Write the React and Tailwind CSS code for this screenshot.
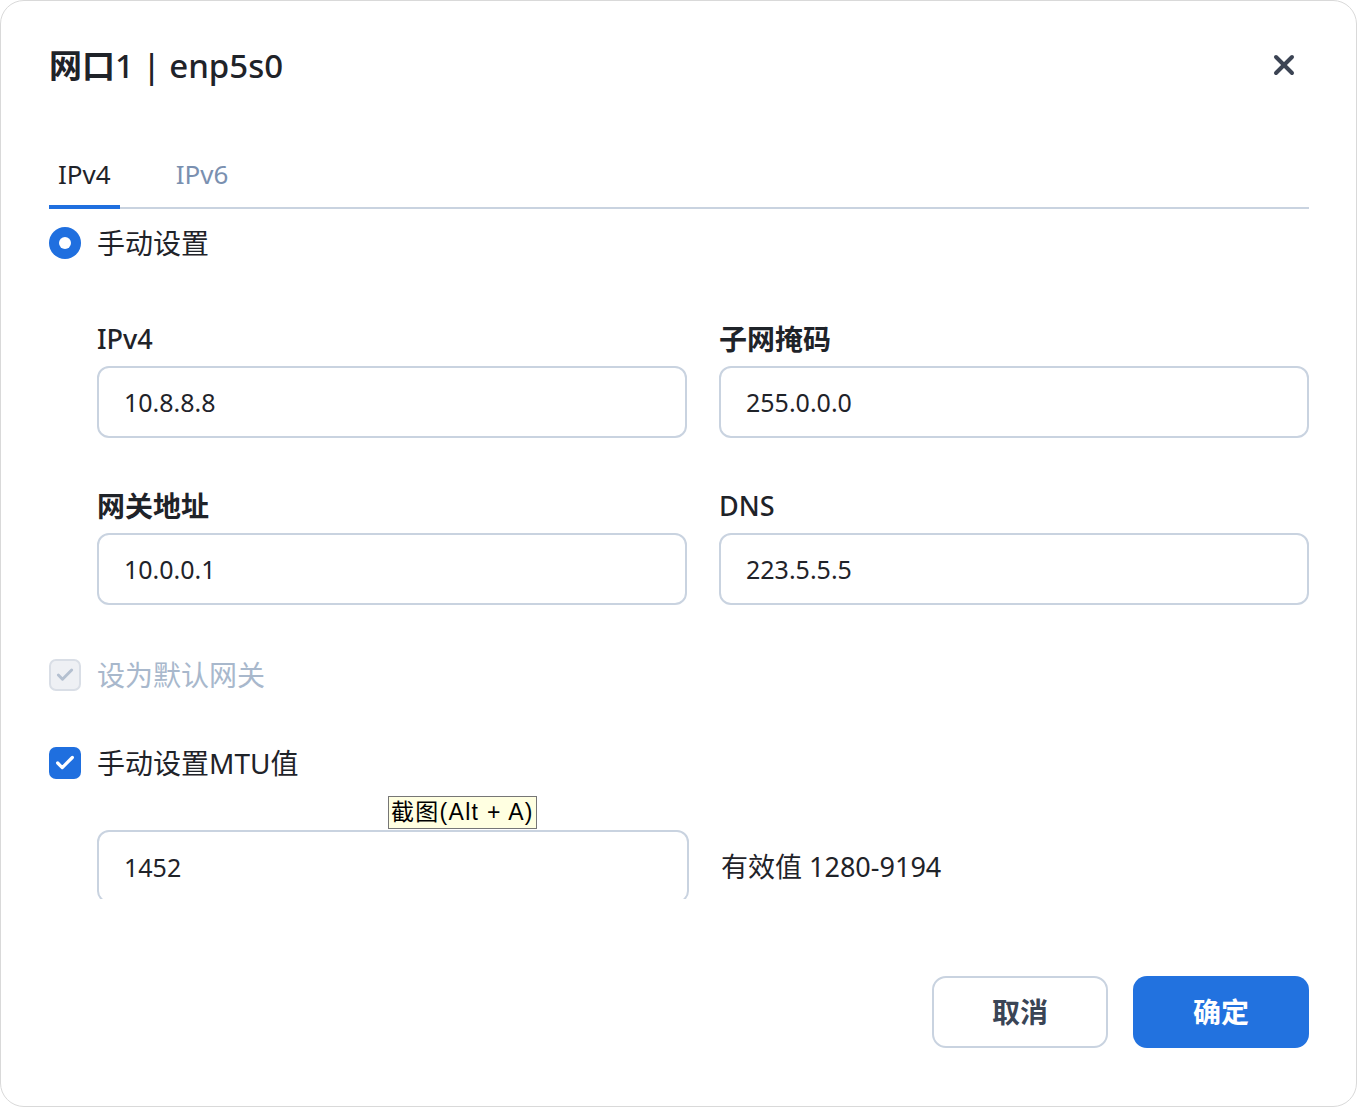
import React, { useState } from 'react';
import { X, Check } from 'lucide-react';

const font = { fontFamily: '"Noto Sans", "Noto Sans CJK SC", sans-serif' };

const Field = ({ label, cjk, value }) => (
  <div className="flex flex-col">
    <label className={`h-[36px] flex items-center text-[27px] text-[#1f2329] ${cjk ? 'font-bold text-[28px]' : 'font-medium'}`}>
      {label}
    </label>
    <input
      defaultValue={value}
      className="mt-[9px] h-[72px] w-full rounded-[12px] border-2 border-[#c9d3e0] bg-white px-[25px] text-[25px] text-[#1f2329] outline-none"
    />
  </div>
);

const App = () => {
  const [tab, setTab] = useState('ipv4');
  const [mtu, setMtu] = useState(true);

  return (
    <div className="w-[1357px] h-[1107px] bg-white" style={font}>
      <div className="relative h-full w-full rounded-[24px] border border-[#d9d9d9] bg-white pl-[48px] pr-[47px]">
        {/* --- HEADER --- */}
        <div className="flex items-center justify-between pt-[42px]">
          <h1 className="text-[33px] font-medium text-[#1f2329] leading-[46px]">
            <span className="font-bold">网口</span>1 | enp5s0
          </h1>
          <button className="mr-[9px] -mt-[2px] text-[#3c4454]">
            <X size={32} strokeWidth={3} />
          </button>
        </div>

        {/* --- TABS --- */}
        <div className="mt-[68px] flex gap-[47px] border-b-2 border-[#c9d3e0]">
          <button
            onClick={() => setTab('ipv4')}
            className={`-mb-[2px] px-[9px] pb-[14px] text-[26px] leading-[34px] border-b-4 ${tab === 'ipv4' ? 'border-[#1f6fdf] text-[#1f2329]' : 'border-transparent text-[#7a90b0]'}`}
          >
            IPv4
          </button>
          <button
            onClick={() => setTab('ipv6')}
            className={`-mb-[2px] px-[9px] pb-[14px] text-[26px] leading-[34px] border-b-4 ${tab === 'ipv6' ? 'border-[#1f6fdf] text-[#1f2329]' : 'border-transparent text-[#7a90b0]'}`}
          >
            IPv6
          </button>
        </div>

        {/* --- MODE --- */}
        <div className="mt-[16px] flex items-center gap-[16px]">
          <span className="flex h-[32px] w-[32px] items-center justify-center rounded-full bg-[#1f6fdf]">
            <span className="h-[12px] w-[12px] rounded-full bg-white" />
          </span>
          <span className="text-[28px] text-[#1f2329] leading-[36px]">手动设置</span>
        </div>

        {/* --- FIELDS --- */}
        <div className="mt-[60px] ml-[48px] grid grid-cols-2 gap-x-[32px] gap-y-[50px]">
          <Field label="IPv4" value="10.8.8.8" />
          <Field label="子网掩码" cjk value="255.0.0.0" />
          <Field label="网关地址" cjk value="10.0.0.1" />
          <Field label="DNS" value="223.5.5.5" />
        </div>

        {/* --- DEFAULT GATEWAY --- */}
        <div className="mt-[52px] flex items-center gap-[16px]">
          <span className="flex h-[32px] w-[32px] items-center justify-center rounded-[7px] border-2 border-[#d9dee6] bg-[#eef0f4]">
            <Check size={20} strokeWidth={3.5} className="text-[#b4c0d0]" />
          </span>
          <span className="text-[28px] text-[#a8b8cc] leading-[36px]">设为默认网关</span>
        </div>

        {/* --- MTU --- */}
        <div className="mt-[52px] flex items-center gap-[16px]">
          <button
            onClick={() => setMtu(!mtu)}
            className={`flex h-[32px] w-[32px] items-center justify-center rounded-[7px] ${mtu ? 'bg-[#1f6fdf]' : 'border-2 border-[#c9d3e0] bg-white'}`}
          >
            {mtu && <Check size={22} strokeWidth={3.5} className="text-white" />}
          </button>
          <span className="text-[28px] text-[#1f2329] leading-[36px]">手动设置MTU值</span>
        </div>

        <div className="relative mt-[49px] ml-[48px] flex items-center gap-[32px]">
          <div className="h-[69px] w-[592px] shrink-0 overflow-hidden">
            <input
              defaultValue="1452"
              className="h-[73px] w-full rounded-[12px] border-2 border-[#c9d3e0] bg-white px-[25px] text-[25px] text-[#1f2329] outline-none"
            />
          </div>
          <span className="mt-[6px] text-[27px] text-[#1f2329]">有效值 1280-9194</span>

          {/* native tooltip */}
          <div
            className="absolute left-[291px] -top-[34px] border border-[#767676] bg-[#ffffe1] px-[2px] text-[23px] leading-[31px] tracking-[1.3px] text-black whitespace-nowrap"
            style={{ fontFamily: '"Liberation Sans", "Noto Sans CJK SC", sans-serif' }}
          >
            截图(Alt + A)
          </div>
        </div>

        {/* --- FOOTER --- */}
        <div className="mt-[77px] flex justify-end gap-[25px]">
          <button className="h-[72px] w-[176px] rounded-[14px] border-2 border-[#c9d3e0] bg-white text-[28px] font-bold text-[#3a4556]">
            取消
          </button>
          <button className="h-[72px] w-[176px] rounded-[14px] bg-[#2272df] text-[28px] font-bold text-white">
            确定
          </button>
        </div>
      </div>
    </div>
  );
};

export default App;
